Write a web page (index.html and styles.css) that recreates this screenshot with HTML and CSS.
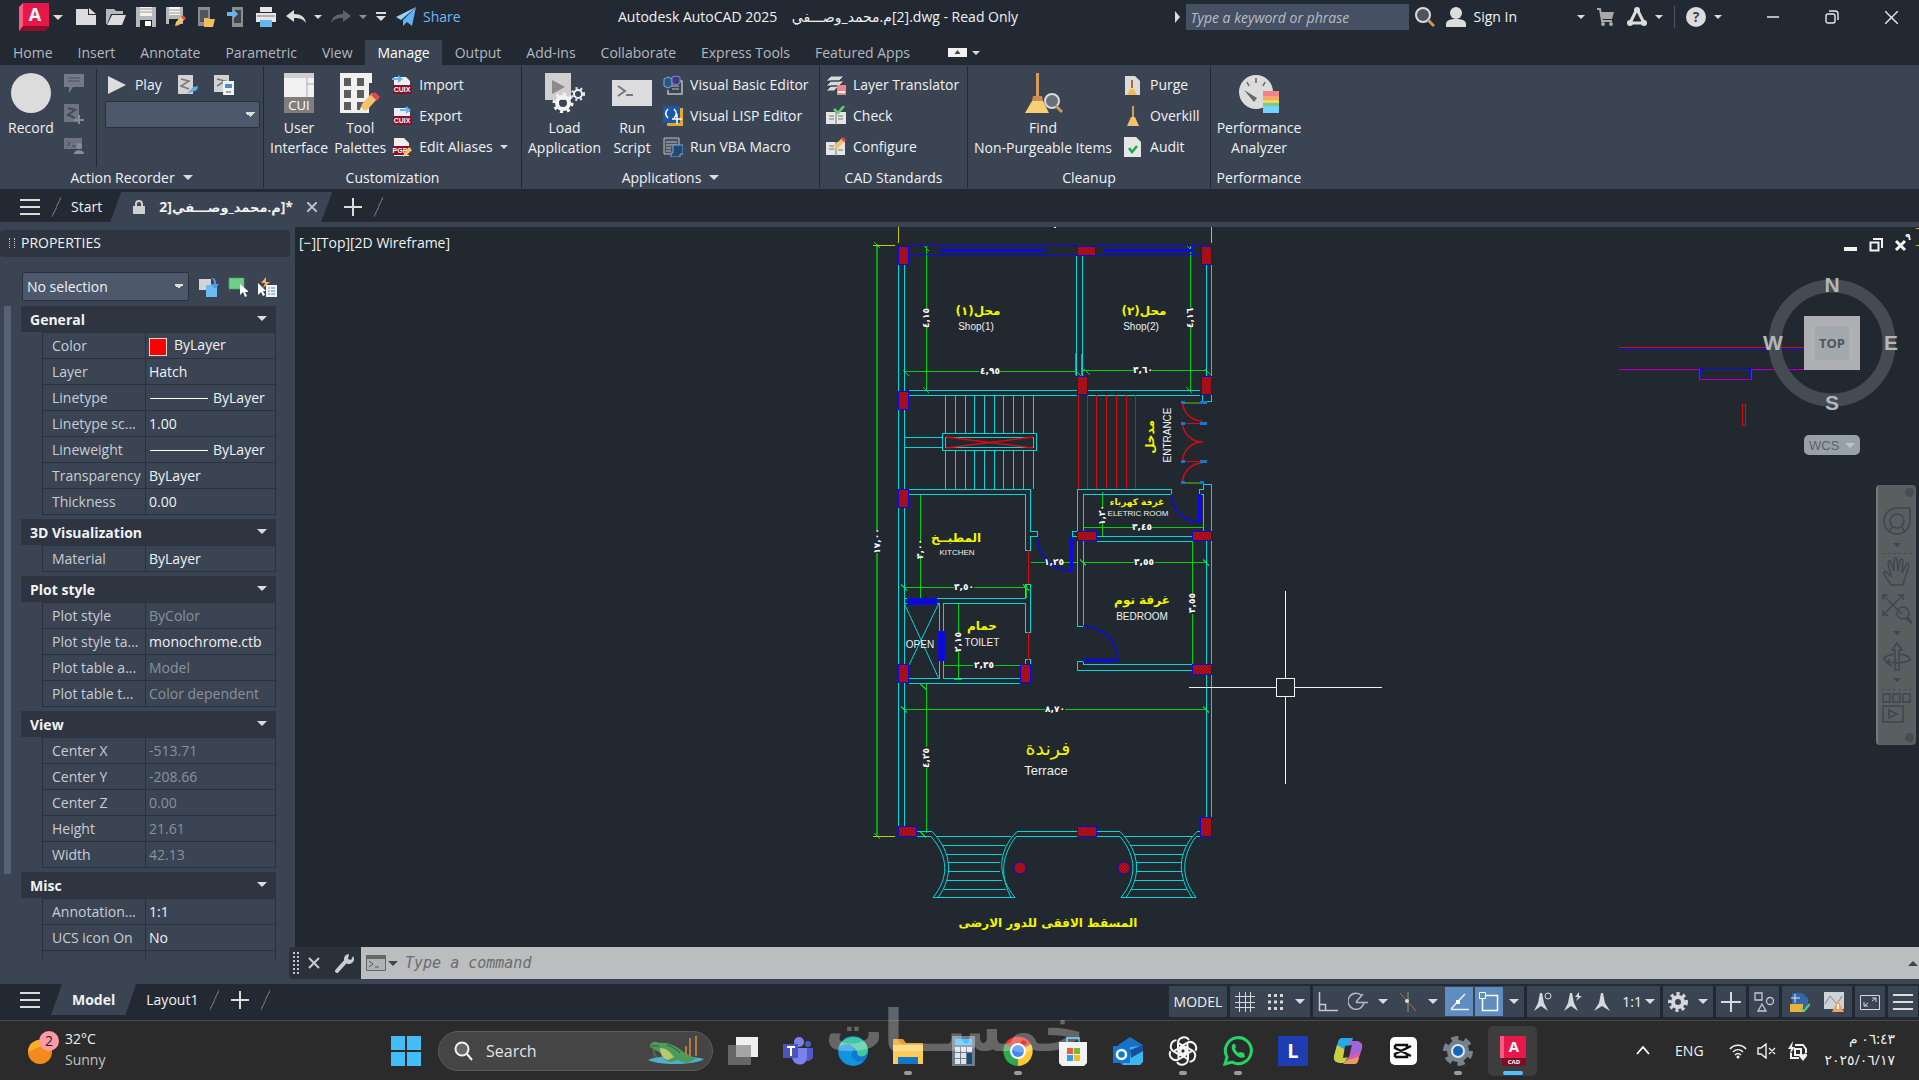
FILE: index.html
```html
<!DOCTYPE html>
<html lang="en">
<head>
  <meta charset="UTF-8">
  <meta name="viewport" content="width=device-width, initial-scale=1.0">
  <title>Autodesk AutoCAD 2025</title>
  <link rel="stylesheet" href="styles.css">
</head>
<body>

<header class="titlebar">
  <div class="quick-access">
    <button class="app-logo" aria-label="Application menu">
      <svg width="31" height="28" viewBox="0 0 31 28"><path d="M1 5 5 0h26v24l-4 4H1z" fill="#8e0d2b"/><path d="M1 4 5 0v23l-4 5z" fill="#ff5a80"/><path d="M5 0h26v23H5z" fill="#e8174b"/><text x="17" y="18" class="logo-letter">A</text></svg>
    </button>
    <i class="caret"></i>
    <button aria-label="New"><svg class="icon" viewBox="0 0 20 20"><path d="M0 2h12v6h8v10H0z" fill="#dcdcdc"/><path d="m13 1 7 6h-7z" fill="#dcdcdc"/></svg></button>
    <button aria-label="Open"><svg class="icon" viewBox="0 0 20 20"><path d="M0 2h8l2 2h7v3H5L1 17H0z" fill="#b8b8b8"/><path d="M6 8h14l-4 10H1z" fill="#dcdcdc"/></svg></button>
    <button aria-label="Save"><svg class="icon" viewBox="0 0 20 20"><path d="M0 0h20v20H0z" fill="#b4b7bb"/><path d="M4 0h12v9H4z" fill="#f2f2f2"/><path d="M4 2h12M4 5h12" stroke="#999"/><path d="M4 13h12v7H4z" fill="#222"/><path d="M9 14h6v5H9z" fill="#fff"/></svg></button>
    <button aria-label="Save as"><svg class="icon" viewBox="0 0 20 20"><path d="M0 0h17v17H0z" fill="#b4b7bb"/><path d="M3 0h11v8H3z" fill="#f2f2f2"/><path d="M3 3h11M3 6h11" stroke="#999"/><path d="M3 12h9v5H3z" fill="#222"/><path d="m9 19 1-4 6-6 3 3-6 6z" fill="#f3c26b"/><path d="m15 10 2-2 3 3-2 2z" fill="#e4474f"/></svg></button>
    <button aria-label="Open from mobile"><svg class="icon" viewBox="0 0 20 20"><path d="M2 0h12v19H2z" fill="#8c8c8c"/><path d="M4 3h8v12H4z" fill="#51565e"/><path d="M8 11h4l1 1h6l-2 8H8z" fill="#f0bd62"/></svg></button>
    <button aria-label="Save to mobile"><svg class="icon" viewBox="0 0 20 20"><path d="M6 0h11v20H6z" fill="#8c8c8c"/><path d="M8 3h7v13H8z" fill="#3e434b"/><path d="M1 5h6V2l5 5-5 5V9H1z" fill="#66b5ee"/></svg></button>
    <button aria-label="Plot"><svg class="icon" viewBox="0 0 20 20"><path d="M4 0h12v5H4zM0 6h20v9H0z" fill="#e6e6e6"/><path d="M1 9h18" stroke="#777"/><path d="M4 13h12v7H4z" fill="#64b5f0"/></svg></button>
    <button aria-label="Undo"><svg class="icon" viewBox="0 0 20 20"><path d="m0 9 8-6v4c7 0 11 3 12 9-3-4-6-5-12-5v4z" fill="#dcdcdc"/></svg></button>
    <i class="caret small"></i>
    <button aria-label="Redo"><svg class="icon" viewBox="0 0 20 20"><path d="m20 9-8-6v4C5 7 1 10 0 16c3-4 6-5 12-5v4z" fill="#5c626b"/></svg></button>
    <i class="caret small dim"></i>
    <button aria-label="Customize toolbar"><svg width="10" height="12" viewBox="0 0 10 12"><path d="M0 2h10" stroke="#dcdcdc" stroke-width="2"/><path d="M0 5h10l-5 5z" fill="#dcdcdc"/></svg></button>
    <button class="share"><svg class="icon" viewBox="0 0 20 20"><path d="M20 0 0 10l5 3z" fill="#9ad0fb"/><path d="M20 0 7 13v6l4-4 5 4z" fill="#62b2f4"/></svg>Share</button>
  </div>
  <div class="doc-title">Autodesk AutoCAD 2025 &nbsp;&nbsp; <bdi>م.محمد_وصـــفي</bdi>[2].dwg - Read Only</div>
  <div class="title-right">
    <i class="caret-right"></i>
    <input class="help-search" type="text" aria-label="Search help" placeholder="Type a keyword or phrase">
    <button aria-label="Search"><svg class="icon" viewBox="0 0 20 20"><circle cx="8" cy="8" r="7" fill="#4d545f" stroke="#dcdcdc" stroke-width="2"/><path d="m13 13 6 6" stroke="#c79a62" stroke-width="3"/></svg></button>
    <button class="signin"><svg class="icon" viewBox="0 0 20 20"><circle cx="10" cy="6" r="6" fill="#dcdcdc"/><path d="M0 20v-3c0-4 5-5 10-5s10 1 10 5v3z" fill="#dcdcdc"/></svg>Sign In</button>
    <i class="caret small"></i>
    <button aria-label="App store"><svg class="icon" viewBox="0 0 20 20"><path d="M1 2h3l2 12h10" fill="none" stroke="#a8a8a8" stroke-width="2"/><path d="M5 5h13l-2 7H6z" fill="#a8a8a8"/><circle cx="7" cy="17" r="2" fill="#a8a8a8"/><circle cx="15" cy="17" r="2" fill="#a8a8a8"/></svg></button>
    <button aria-label="Autodesk"><svg class="icon" viewBox="0 0 20 20"><path d="m10 2 7 14H3z" fill="none" stroke="#dcdcdc" stroke-width="3" stroke-linejoin="round"/><circle cx="3" cy="16" r="3" fill="#dcdcdc"/><circle cx="17" cy="16" r="3" fill="#dcdcdc"/><circle cx="10" cy="3" r="3" fill="#dcdcdc"/></svg></button>
    <i class="caret small"></i>
    <span class="title-divider"></span>
    <button aria-label="Help"><svg class="icon" viewBox="0 0 20 20"><circle cx="10" cy="10" r="10" fill="#dcdcdc"/><text x="10" y="15" class="help-mark">?</text></svg></button>
    <i class="caret small"></i>
    <div class="window-buttons">
      <button aria-label="Minimize"><svg width="12" height="12" viewBox="0 0 12 12"><path d="M0 6h12" stroke="#e8e8e8" stroke-width="1.5"/></svg></button>
      <button aria-label="Restore"><svg width="14" height="14" viewBox="0 0 14 14"><rect x="1" y="4" width="9" height="9" rx="2" fill="none" stroke="#e8e8e8" stroke-width="1.4"/><path d="M4 1h6a3 3 0 0 1 3 3v6" fill="none" stroke="#e8e8e8" stroke-width="1.4"/></svg></button>
      <button aria-label="Close"><svg width="13" height="13" viewBox="0 0 13 13"><path d="m0 0 13 13M13 0 0 13" stroke="#e8e8e8" stroke-width="1.4"/></svg></button>
    </div>
  </div>
</header>

<nav class="ribbon-tabs">
  <button>Home</button>
  <button>Insert</button>
  <button>Annotate</button>
  <button>Parametric</button>
  <button>View</button>
  <button class="active">Manage</button>
  <button>Output</button>
  <button>Add-ins</button>
  <button>Collaborate</button>
  <button>Express Tools</button>
  <button>Featured Apps</button>
  <button class="ribbon-toggle" aria-label="Minimize ribbon"><svg width="19" height="9" viewBox="0 0 19 9"><path d="M0 0h19v9H0z" fill="#f2f2f2"/><path d="m9.500 2 3 4h-6z" fill="#444"/></svg></button>
  <i class="caret small"></i>
</nav>

<section class="ribbon">
  <div class="panel recorder">
    <div class="panel-body">
      <button class="big"><svg class="big-icon" viewBox="0 0 40 40"><circle cx="20" cy="20" r="20" fill="#dcdcdc"/></svg>Record</button>
      <div class="stack">
        <button aria-label="Insert message"><svg class="icon" viewBox="0 0 20 20"><path d="M0 1h20v13H9l-4 6v-6H0z" fill="#747b86"/><path d="M4 5h12M4 8h12" stroke="#4a515e"/></svg></button>
        <button aria-label="Insert base point"><svg class="icon" viewBox="0 0 20 20"><path d="M0 0h15v18H0z" fill="#6d747f"/><path d="m4 4 7 2-7 5 7 3" fill="none" stroke="#434a57" stroke-width="2"/><path d="M15 11v9M10 16h10" stroke="#878d96" stroke-width="2"/></svg></button>
        <button aria-label="Request user input"><svg class="icon" viewBox="0 0 20 20"><path d="M0 3h18v11H0z" fill="#6d747f"/><path d="m3 6 3 3-3 2m5 0h4" fill="none" stroke="#3f4653"/><circle cx="15" cy="11" r="3" fill="#878d96"/><path d="M10 19c0-5 10-5 10 0z" fill="#878d96"/></svg></button>
      </div>
      <div class="recorder-side">
        <div class="play-row">
          <button><svg class="icon" viewBox="0 0 20 20"><path d="m0 1 18 9-18 9z" fill="#dcdcdc"/></svg>Play</button>
          <button aria-label="Preference"><svg class="icon" viewBox="0 0 20 20"><path d="M0 0h15v19H0z" fill="#d3d3d3"/><path d="m3 4 8 2-8 5 8 3" fill="none" stroke="#777" stroke-width="1.500"/><path d="m9 19 6-7 5-1-1 4z" fill="#63aeea"/></svg></button>
          <button aria-label="Manage macros"><svg class="icon" viewBox="0 0 20 20"><path d="M0 0h15v17H0z" fill="#d3d3d3"/><path d="m3 4 8 2-8 5" fill="none" stroke="#777" stroke-width="1.500"/><path d="M9 6h11v14H9z" fill="#f2f2f2"/><path d="M11 9h7v4h-7z" fill="#4a90c8"/><path d="M12 17h5" stroke="#555"/></svg></button>
        </div>
        <select class="macro-select" aria-label="Available action macros"><option></option></select>
      </div>
    </div>
    <div class="panel-title">Action Recorder <i class="caret"></i></div>
  </div>

  <div class="panel customization">
    <div class="panel-body">
      <button class="big"><svg class="big-icon" viewBox="0 0 40 40"><path d="M5 0h30v40H5z" fill="#f1f1f1"/><path d="M5 0h30v5H5z" fill="#cfcfcf"/><path d="M28 5v20M28 11h7" stroke="#aaa"/><path d="M5 24h30v16H5z" fill="#7f7f7f"/><text x="20" y="37" class="cui-text">CUI</text></svg>User<br>Interface</button>
      <button class="big"><svg class="big-icon" viewBox="0 0 40 40"><path d="M0 0h32v10h-3v30H0z" fill="#f1f1f1"/><path d="M4 5h7v8H4zm13 0h7v8h-7zM4 17h7v8H4zm13 0h7v8h-7zM4 29h7v8H4zm13 0h7v8h-7z" fill="#5c5c5c"/><path d="m19 40 3-9 10-11 6 5-11 12z" fill="#f3c26b"/><path d="m31 22 4-3 5 5-3 4z" fill="#e4474f"/><path d="m19 40 2-6 4 4z" fill="#eee"/></svg>Tool<br>Palettes</button>
      <div class="list">
        <button><svg class="icon" viewBox="0 0 20 20"><path d="M2 2h12l4 4v13H2z" fill="#eee"/><path d="M1 10h19v9H1z" fill="#8a1027"/><text x="10" y="17" class="file-tag">CUIX</text><path d="M0 3h6V0l5 4-5 4V5H0z" fill="#66b5ee"/></svg>Import</button>
        <button><svg class="icon" viewBox="0 0 20 20"><path d="M2 2h12l4 4v13H2z" fill="#eee"/><path d="M1 10h19v9H1z" fill="#8a1027"/><text x="10" y="17" class="file-tag">CUIX</text><path d="M8 3h6V0l5 4-5 4V5H8z" fill="#66b5ee"/></svg>Export</button>
        <button><svg class="icon" viewBox="0 0 20 20"><path d="M2 1h10l5 5v13H2z" fill="#eee"/><path d="M1 9h17v9H1z" fill="#8a1027"/><text x="8" y="16" class="file-tag">PGP</text><path d="m11 20 1-4 5-6 3 3-5 5z" fill="#f3c26b"/></svg>Edit Aliases<i class="caret small"></i></button>
      </div>
    </div>
    <div class="panel-title">Customization</div>
  </div>

  <div class="panel applications">
    <div class="panel-body">
      <button class="big"><svg class="big-icon" viewBox="0 0 40 40"><path d="M0 0h26v27H0z" fill="#cfcfcf"/><path d="m7 7 13 7-13 7z" fill="#8a8a8a"/><circle cx="18" cy="30" r="6" fill="none" stroke="#f4f4f4" stroke-width="4"/><circle cx="18" cy="30" r="9" fill="none" stroke="#f4f4f4" stroke-width="3" stroke-dasharray="3 4"/><circle cx="33" cy="21" r="4" fill="none" stroke="#f4f4f4" stroke-width="2"/><circle cx="33" cy="21" r="6" fill="none" stroke="#f4f4f4" stroke-width="2" stroke-dasharray="2 3"/></svg>Load<br>Application</button>
      <button class="big"><svg class="big-icon" viewBox="0 0 40 40"><path d="M0 7h40v26H0z" fill="#dcdcdc"/><path d="m6 13 7 5-7 5M14 22h7" fill="none" stroke="#777" stroke-width="2"/></svg>Run<br>Script</button>
      <div class="list">
        <button><svg class="icon" viewBox="0 0 20 20"><path d="M8 6h11v13H5v-4" fill="none" stroke="#bbb" stroke-width="1.500"/><path d="M9 11h7M9 14h7" stroke="#bbb"/><path d="m1 4 4-2 4 2v7l-4 2-4-2z" fill="#2d567c" stroke="#6fb6ec"/><path d="m9 2 4-1 4 1v6l-4 2-4-2z" fill="#3c3f77" stroke="#8d82dd"/></svg>Visual Basic Editor</button>
        <button><svg class="icon" viewBox="0 0 20 20"><path d="M4 2h16v18H4z" fill="#e3a92f"/><path d="M0 0h17v17H0z" fill="#1c58a8"/><path d="M5 3c-3 3-3 6 0 9M11 3c3 3 3 6 0 9M14 8v10M9 13h10" fill="none" stroke="#fff" stroke-width="1.500"/></svg>Visual LISP Editor</button>
        <button><svg class="icon" viewBox="0 0 20 20"><path d="M1 1h15v16H1z" fill="#4a5260" stroke="#bbb"/><path d="M3 5h11M3 8h11M3 11h5M3 14h5" stroke="#bbb"/><path d="M10 8h10v9h-3v3H8v-4h2z" fill="#29476a" stroke="#63aeea"/></svg>Run VBA Macro</button>
      </div>
    </div>
    <div class="panel-title">Applications <i class="caret"></i></div>
  </div>

  <div class="panel standards">
    <div class="panel-body">
      <div class="list">
        <button><svg class="icon" viewBox="0 0 20 20"><path d="m5 1h13l-5 5H0zM5 6h13l-5 5H0zM5 11h8l-5 5H0z" fill="#d9d9d9" stroke="#3b4453"/><path d="M11 10h9v10h-9z" fill="#f2828b"/><path d="M12 17h7" stroke="#fff" stroke-width="2"/></svg>Layer Translator</button>
        <button><svg class="icon" viewBox="0 0 20 20"><path d="M0 6h9l1 1 1-1h9v12H0z" fill="#e6e6e6"/><path d="M10 7v12M3 10h5M3 13h5M12 10h5M12 13h5" stroke="#777"/><path d="m8 3 4 4 6-7" fill="none" stroke="#5fd07a" stroke-width="2.500"/></svg>Check</button>
        <button><svg class="icon" viewBox="0 0 20 20"><path d="M0 5h9l1 1 1-1h8v13H0z" fill="#e6e6e6"/><path d="M10 6v13M3 9h5M3 12h5M12 13h5" stroke="#777"/><path d="m8 12 1-4 7-7 3 3-7 7z" fill="#f3c26b"/><path d="m15 2 2-2 3 3-2 2z" fill="#e4474f"/></svg>Configure</button>
      </div>
    </div>
    <div class="panel-title">CAD Standards</div>
  </div>

  <div class="panel cleanup">
    <div class="panel-body">
      <button class="big"><svg class="big-icon" viewBox="0 0 40 40"><path d="M13 0h3v24h-3z" fill="#d99a5b"/><path d="M10 23h9l1 5H9z" fill="#c98f50"/><path d="M9 28h11l6 12H2z" fill="#f9cf76"/><circle cx="29" cy="28" r="7" fill="#69707b" stroke="#dcdcdc" stroke-width="2"/><path d="m33 33 6 6" stroke="#c79a62" stroke-width="3"/></svg>Find<br>Non-Purgeable Items</button>
      <div class="list">
        <button><svg class="icon" viewBox="0 0 20 20"><path d="M2 1h10l5 5v14H2z" fill="#dcdcdc"/><path d="M8 5h2v8H8z" fill="#a96b2f"/><path d="M7 14h4l3 6H4z" fill="#f3b852"/></svg>Purge</button>
        <button><svg class="icon" viewBox="0 0 20 20"><path d="M9 0h2v11H9z" fill="#d99a5b"/><path d="M8 11h4l4 9H4z" fill="#f3c26b"/></svg>Overkill</button>
        <button><svg class="icon" viewBox="0 0 20 20"><path d="M1 0h12l5 5v15H1z" fill="#e6e6e6"/><path d="m6 11 3 4 5-6" fill="none" stroke="#1fa84c" stroke-width="2.500"/></svg>Audit</button>
      </div>
    </div>
    <div class="panel-title">Cleanup</div>
  </div>

  <div class="panel performance">
    <div class="panel-body">
      <button class="big"><svg class="big-icon" viewBox="0 0 40 40"><circle cx="17" cy="19" r="17" fill="#dcdcdc"/><path d="M17 5v5M8 9l2 4M26 9l-2 4" stroke="#666" stroke-width="1.500"/><path d="m5 17 13 8-3 4z" fill="#666"/><path d="M24 18h16v22H24z" fill="#78d1fb"/><path d="M24 18h16v5H24z" fill="#f2828b"/><path d="M24 23h16v4H24z" fill="#f5a96a"/><path d="M24 27h16v3H24z" fill="#f5d265"/><path d="M24 30h16v3H24z" fill="#6fcf86"/></svg>Performance<br>Analyzer</button>
    </div>
    <div class="panel-title">Performance</div>
  </div>
</section>

<nav class="file-tabs">
  <button class="hamburger" aria-label="Tab menu"><i></i></button>
  <span class="slash"></span>
  <button class="tab-plain">Start</button>
  <div class="file-tab">
    <svg width="12" height="14" viewBox="0 0 12 14"><path d="M3 6V4a3 3 0 0 1 6 0v2" fill="none" stroke="#cfcfcf" stroke-width="2"/><path d="M0 6h12v8H0z" fill="#cfcfcf"/></svg>
    <button class="tab-name">2]<bdi>م.محمد_وصـــفي</bdi>]*</button>
    <button aria-label="Close tab"><svg width="10" height="10" viewBox="0 0 10 10"><path d="m0 0 10 10M10 0 0 10" stroke="#b9bec6" stroke-width="2"/></svg></button>
  </div>
  <button class="plus" aria-label="New tab"></button>
  <span class="slash"></span>
</nav>

<main class="workspace">
  <aside class="palette">
    <h2>PROPERTIES</h2>
    <div class="palette-tools">
      <select aria-label="Selection"><option>No selection</option></select>
      <button aria-label="Toggle pickadd"><svg class="icon" viewBox="0 0 20 20"><path d="M0 2h12v11H0z" fill="#d4d4d4"/><path d="M7 8h11v12H7z" fill="#6bbcf2"/><path d="M12 1c5 0 5 3 5 6h3l-4 5-4-5h3c0-3 0-4-3-6z" fill="#4f9de0"/></svg></button>
      <button aria-label="Select objects"><svg class="icon" viewBox="0 0 20 20"><path d="M1 1h15v11H1z" fill="#6fcf86" stroke="#3fa85c" stroke-dasharray="2 1"/><path d="M12 7v11l3-3 2 5 2-1-2-4h4z" fill="#fff"/></svg></button>
      <button aria-label="Quick select"><svg class="icon" viewBox="0 0 20 20"><path d="m9 0-5 6h4l-2 5 7-6H9z" fill="#f5b061"/><path d="M1 6v12l3-3 2 4 2-1-2-4h3z" fill="#fff"/><path d="M9 8h11v12H9z" fill="#f2f2f2"/><path d="M11 11h2m1 0h4m-7 3h2m1 0h4m-7 3h2m1 0h4" stroke="#3d8fd1"/></svg></button>
    </div>
    <div class="property-list">
      <table>
        <caption>General<i class="caret"></i></caption>
        <tr><th>Color</th><td><span class="swatch"></span>ByLayer</td></tr>
        <tr><th>Layer</th><td>Hatch</td></tr>
        <tr><th>Linetype</th><td><span class="line-sample"></span>ByLayer</td></tr>
        <tr><th>Linetype sc...</th><td>1.00</td></tr>
        <tr><th>Lineweight</th><td><span class="line-sample"></span>ByLayer</td></tr>
        <tr><th>Transparency</th><td>ByLayer</td></tr>
        <tr><th>Thickness</th><td>0.00</td></tr>
      </table>
      <table>
        <caption>3D Visualization<i class="caret"></i></caption>
        <tr><th>Material</th><td>ByLayer</td></tr>
      </table>
      <table>
        <caption>Plot style<i class="caret"></i></caption>
        <tr><th>Plot style</th><td class="locked">ByColor</td></tr>
        <tr><th>Plot style ta...</th><td>monochrome.ctb</td></tr>
        <tr><th>Plot table a...</th><td class="locked">Model</td></tr>
        <tr><th>Plot table t...</th><td class="locked">Color dependent</td></tr>
      </table>
      <table>
        <caption>View<i class="caret"></i></caption>
        <tr><th>Center X</th><td class="locked">-513.71</td></tr>
        <tr><th>Center Y</th><td class="locked">-208.66</td></tr>
        <tr><th>Center Z</th><td class="locked">0.00</td></tr>
        <tr><th>Height</th><td class="locked">21.61</td></tr>
        <tr><th>Width</th><td class="locked">42.13</td></tr>
      </table>
      <table>
        <caption>Misc<i class="caret"></i></caption>
        <tr><th>Annotation...</th><td>1:1</td></tr>
        <tr><th>UCS icon On</th><td>No</td></tr>
        <tr><th>UCS icon at...</th><td>No</td></tr>
      </table>
    </div>
  </aside>

  <div class="drawing-column">
    <div class="drawing">
      <svg class="plan" viewBox="295 227 1624 720">
        <defs>
          <pattern id="hatch" width="3" height="3" patternUnits="userSpaceOnUse">
            <path d="M0 0h3v3H0z" fill="#c40a12"/><path d="M0 3 3 0" stroke="#6b1420"/>
          </pattern>
        </defs>

        <!-- dimension lines -->
        <g class="dim">
          <path class="dim-main" d="M877 244V530M877 553V837"/>
          <path d="M926.500 245V308M926.500 327V391M904 371.500H979M1000 371.500H1076M1082 370.500H1135M1152 370.500H1206M1190.500 245V308M1190.500 327V391"/>
          <path d="M920.500 494V543M920.500 555V598M904 587.500H954M974 587.500H1026M1102.500 492V507M1102.500 523V537M1083 527.500H1133M1152 527.500H1203M1031 562.500H1045M1063 562.500H1078M1083 562.500H1134M1155 562.500H1206M1192.500 541V593M1192.500 614V665"/>
          <path d="M958.500 603V633M958.500 651V679M943 665.500H973M995 665.500H1026M904 709.500H1045M1065 709.500H1206M926.500 683V747M926.500 768V833"/>
          <path d="M904.500 357V375M1075.500 353V375M1081.500 354V375M1206.500 357V375M904.500 584V598M1026.500 584V598M1083.500 541V567M1206.500 541V567M904.500 684V713M1206.500 676V713M909 390.500H930M1186 390.500H1200M909 494.500H924M917 683.500H931M922 831.500H932M954 603.500H962M954 679.500H962"/>
          <path d="m874 242 6 6m-6 585 6 6m43-594 6 6m-6 136 6 6m257-148 6 6m-6 136 6 6m-289-23 6 6m166-6 6 6m3-7 6 6m115-6 6 6M901 584.500l6 6m116-6 6 6m51-31 6 6m117-6 6 6m-308 141 6 6m296-6 6 6m-289-29 6 6m-6 142 6 6"/>
        </g>
        <path class="mark" d="M898.500 227V243M1211.500 227V243M873 245.500H895M873 836.500H895M1916 228.500H1919M1916 245.500H1919"/>
        <path class="white" d="M1054 227.500h2"/>

        <!-- walls -->
        <g class="wall">
          <path d="M898.500 264V391M898.500 410V489M898.500 508V664M898.500 683V826M904.500 264V391M904.500 410V489M904.500 508V664M904.500 683V826"/>
          <path d="M1206.500 264V376M1211.500 264V376M1211.500 395V401H1202.500V395M1206.500 541V664M1206.500 675V817M1203.500 531V494H1199.500V489H1203.500V484H1211.500V817"/>
          <path d="M1076.500 256V376M1082.500 256V376M909 390.500H1077M909 395.500H1077M1087 390.500H1200M1087 395.500H1200"/>
          <path d="M945.500 395V433M955.500 395V433M965.500 395V433M974.500 395V433M984.500 395V433M994.500 395V433M1003.500 395V433M1013.500 395V433M1023.500 395V433M1033.500 395V433M945.500 451V489M955.500 451V489M965.500 451V489M974.500 451V489M984.500 451V489M994.500 451V489M1003.500 451V489M1013.500 451V489M1023.500 451V489M1033.500 451V489"/>
          <path d="M942.500 433.500H1036.500V450.500H942.500zM945.500 437.500H1033.500V447.500H945.500zM904 437.500H942M904 447.500H942"/>
          <path d="M909 489.500H1030.500V531.500H1037.500V536.500H1030.500V550.500H1025.500V494.500H909M1025.500 598.500V584.500H1030.500V632.500H1025.500V603.500H943.500V678.500H1020M904 598.500H1025.500M904 603.500H939.500V678.500H909M909 683.500H1020M1025.500 664V659.500H1030.500V664"/>
          <path class="smooth" d="M904.500 604 938.500 678M938.500 604 909 665"/>
          <path d="M1077.500 531V489.500H1171.500V494.500H1083.500V531M1077 536.500H1072.500V531.500H1077M1097 536.500H1192M1097 541.500H1192M1077.500 541V626.500H1083.500V541M1192 664.500H1083.500V661.500H1077.500V670.500H1192"/>
          <path d="M937 836.500H1011M943 845.500H1005M947 854.500H1002M948 862.500H1000M948 871.500H1000M947 880.500H1002M944 889.500H1006M933 897.500H1015M1125 836.500H1192M1131 845.500H1186M1134 854.500H1183M1136 862.500H1182M1136 871.500H1182M1134 880.500H1184M1131 889.500H1187M1121 897.500H1196"/>
          <path class="smooth" d="M917 831.500H932C953 853 953 877 938 897.500M917 836.500H931C949 857 949 878 933 897.500M1077 831.500H1017C996 853 998 877 1015 897.500M1077 836.500H1016C1000 857 1001 878 1011 897.500M1097 831.500H1120C1141 853 1141 877 1126 897.500M1097 836.500H1120C1137 857 1137 878 1121 897.500M1200 831.500H1197C1176 853 1178 877 1192 897.500M1200 836.500H1196C1181 857 1181 878 1196 897.500"/>
        </g>

        <!-- windows, doors and entrance steps -->
        <g class="opening">
          <path d="M909 245.500H1077M1096 245.500H1201M909 254.500H1077M1096 254.500H1201M939.500 245V254M1045.500 245V254M1103.500 245V254M1192.500 245V254"/>
          <path class="thick" d="M939 250H1045M1103 250H1192M1071 537V571M1199 494V522M1083 660H1118"/>
          <path class="window" d="M907 598h29v6h-29zM938 631h6v29h-6z"/>
          <path class="smooth" d="M1037.500 537A34 34 0 0 0 1071 571M1171.500 494A28 28 0 0 0 1199 522M1083 626A35 35 0 0 1 1118 660"/>
        </g>
        <g class="red">
          <path d="M1078.500 395V489M1087.500 395V489M1096.500 395V489M1106.500 395V489M1116.500 395V489M1126.500 395V489M1135.500 395V489M1028.500 550V584M1028.500 632V660M1184 423.500H1204M1184 461.500H1204"/>
          <path class="smooth" d="M946 437 1033 448M946 448 1033 437M1182.500 403A20 20 0 0 0 1202 421M1182.500 423A20 20 0 0 0 1203 442A20 20 0 0 0 1182.500 461M1202 463A20 20 0 0 0 1182.500 482"/>
        </g>
        <path class="jamb" d="M1181 402.500h4m15 0h7M1181 423.500h4m15 0h7M1181 461.500h4m15 0h7M1181 482.500h4m15 0h4"/>
        <path class="sill" d="M1185 402.500h15m-15 80h15"/>

        <!-- columns -->
        <g class="column">
          <rect x="898.500" y="246.500" width="10" height="18"/><rect x="1077.500" y="246.500" width="18" height="9"/><rect x="1201.500" y="246.500" width="10" height="18"/>
          <rect x="898.500" y="391.500" width="10" height="18"/><rect x="1077.500" y="376.500" width="10" height="18"/><rect x="1201.500" y="376.500" width="10" height="18"/>
          <rect x="898.500" y="489.500" width="10" height="18"/><rect x="1077.500" y="531.500" width="19" height="9"/><rect x="1192.500" y="531.500" width="19" height="9"/>
          <rect x="898.500" y="664.500" width="10" height="18"/><rect x="1020.500" y="664.500" width="10" height="18"/><rect x="1192.500" y="664.500" width="19" height="10"/>
          <rect x="898.500" y="826.500" width="18" height="10"/><rect x="1077.500" y="826.500" width="19" height="10"/><rect x="1200.500" y="817.500" width="11" height="19"/>
          <circle cx="1020" cy="868" r="6"/><circle cx="1124" cy="868" r="6"/>
        </g>

        <!-- section at the right of the sheet -->
        <path class="red" d="M1619 347.500H1832M1619 369.500H1699.500V379.500H1751.500V369.500H1832M1742.500 404.500h3v21h-3z"/>
        <path class="opening" d="M1619 348.500H1832M1619 368.500H1832M1700.500 368V378.500H1750.500V368"/>

        <!-- room names -->
        <g class="arabic">
          <text x="978" y="315">محل(١)</text>
          <text x="1144" y="315">محل(٢)</text>
          <text transform="translate(1154 437) rotate(-90)">مدخل</text>
          <text x="956" y="542">المطبــخ</text>
          <text class="tiny" x="1137" y="505">غرفة كهرباء</text>
          <text x="1142" y="604">غرفة نوم</text>
          <text x="982" y="630">حمام</text>
          <text class="large" x="1048" y="755">فرندة</text>
          <text x="1048" y="927">المسقط الافقى للدور الارضى</text>
        </g>
        <g class="latin">
          <text x="976" y="330">Shop(1)</text>
          <text x="1141" y="330">Shop(2)</text>
          <text transform="translate(1171 435) rotate(-90)">ENTRANCE</text>
          <text class="tiny" x="957" y="555">KITCHEN</text>
          <text class="tiny" x="1138" y="516">ELETRIC ROOM</text>
          <text x="1142" y="620">BEDROOM</text>
          <text x="982" y="646">TOILET</text>
          <text x="920" y="648">OPEN</text>
          <text class="large" x="1046" y="775">Terrace</text>
        </g>
        <g class="measure">
          <text x="990" y="374">٤,٩٥</text>
          <text x="1143" y="373">٣,٦٠</text>
          <text x="964" y="590">٣,٥٠</text>
          <text x="1142" y="530">٣,٤٥</text>
          <text x="1054" y="565">١,٢٥</text>
          <text x="1144" y="565">٣,٥٥</text>
          <text x="984" y="668">٢,٣٥</text>
          <text x="1055" y="712">٨,٧٠</text>
          <text transform="translate(929 318) rotate(-90)">٤,١٥</text>
          <text transform="translate(1193 318) rotate(-90)">٤,١٦</text>
          <text transform="translate(880 541) rotate(-90)">١٧,٠٠</text>
          <text transform="translate(923 549) rotate(-90)">٣,٠٠</text>
          <text transform="translate(1105 515) rotate(-90)">١,٢٠</text>
          <text transform="translate(1195 603) rotate(-90)">٣,٥٥</text>
          <text transform="translate(961 642) rotate(-90)">٢,١٥</text>
          <text transform="translate(929 758) rotate(-90)">٤,٢٥</text>
          <text x="1908" y="240">٩</text>
        </g>

        <!-- crosshair -->
        <path class="white" d="M1189 687.500H1276M1295 687.500H1382M1285.500 591V678M1285.500 697V784M1276.500 678.500h18v18h-18z"/>
      </svg>

      <div class="view-label">[−][Top][2D Wireframe]</div>
      <div class="viewport-buttons">
        <button aria-label="Minimize drawing"><svg width="14" height="14" viewBox="0 0 14 14"><path d="M0 9h13v4H0z" fill="#f2f2f2"/></svg></button>
        <button aria-label="Restore drawing"><svg width="14" height="14" viewBox="0 0 14 14"><path d="M4 1h9v9M1.500 4.500h8v8h-8z" fill="none" stroke="#f2f2f2" stroke-width="2"/></svg></button>
        <button aria-label="Close drawing"><svg width="14" height="14" viewBox="0 0 14 14"><path d="m2 3 9 9m0-9-9 9" stroke="#f2f2f2" stroke-width="3"/></svg></button>
      </div>
      <div class="view-cube">
        <svg width="138" height="138" viewBox="0 0 138 138">
          <circle cx="69" cy="68" r="57" fill="none" stroke="#454b53" stroke-width="13"/>
          <path d="M41 41h56v54H41z" fill="#b3b5b8" fill-opacity=".96"/>
          <path d="M52 51h34v34H52z" fill="#a3a8ad"/>
          <text class="cube-top" x="69" y="73">TOP</text>
          <g class="cube-side"><text x="69" y="17">N</text><text x="69" y="135">S</text><text x="10" y="75">W</text><text x="128" y="75">E</text></g>
        </svg>
        <button class="wcs">WCS <i class="caret"></i></button>
      </div>
      <div class="nav-bar">
        <button aria-label="Full navigation wheel"><svg width="30" height="30" viewBox="0 0 30 30"><path d="M15 2h13v13a13 13 0 1 1-13-13z"/><circle cx="15" cy="15" r="7"/><path d="m10 21-3 5m13-5 3 5"/></svg></button>
        <i class="caret small"></i>
        <button class="group" aria-label="Pan"><svg width="30" height="30" viewBox="0 0 30 30"><path d="M9 28 2 17c-1-3 2-3 3-1l4 3L6 6c0-3 3-3 3 0l3 8V3c0-3 3-3 3 0l1 11 2-10c1-3 3-2 3 0l-1 12 4-8c1-3 3-1 3 1l-4 12-2 7z"/></svg></button>
        <button aria-label="Zoom extents"><svg width="30" height="30" viewBox="0 0 30 30"><path d="m2 2 18 18M20 2 2 20M1 6V1h5M16 1h5v5M1 16v5h5"/><circle cx="21" cy="19" r="6"/><path d="m25 24 5 5" stroke-width="3"/></svg></button>
        <i class="caret small"></i>
        <button aria-label="Orbit"><svg width="30" height="30" viewBox="0 0 30 30"><path d="M13 28V8h-3l5-7 5 7h-3v20zM12 12c-14 3-14 8 3 9 17-1 17-6 3-9M8 17l-3 4 5 3"/></svg></button>
        <i class="caret small"></i>
        <button class="group" aria-label="Show motion"><svg width="30" height="30" viewBox="0 0 30 30"><path d="M1 1h7v8H1zM11 1h7v8h-7zM21 1h7v8h-7zM1 13h20v16H1zM7 17l8 4-8 4z"/></svg></button>
      </div>
    </div>

    <div class="command-line">
      <span class="grip"></span>
      <button aria-label="Close command line"><svg width="12" height="12" viewBox="0 0 12 12"><path d="m1 1 10 10M11 1 1 11" stroke="#c9ccd0" stroke-width="2"/></svg></button>
      <button aria-label="Customize"><svg width="20" height="20" viewBox="0 0 20 20"><path d="m2 18 9-10" stroke="#c9ccd0" stroke-width="4" stroke-linecap="round"/><path d="M18 3a5 5 0 1 1-4-2l-1 5 3 1z" fill="#c9ccd0"/></svg></button>
      <label class="command-field">
        <svg width="20" height="16" viewBox="0 0 20 16"><path d="M.5.500h19v15H.5z" fill="#b0b2b4" stroke="#666"/><path d="M0 0h20v4H0z" fill="#666"/><path d="m3 6 4 3-4 3m6 0h4" fill="none" stroke="#555"/></svg>
        <i class="caret dark"></i>
        <input type="text" aria-label="Command" placeholder="Type a command">
        <i class="caret-up"></i>
      </label>
    </div>
  </div>
</main>

<footer class="status-bar">
  <div class="layout-tabs">
    <button class="hamburger" aria-label="Layout menu"><i></i></button>
    <button class="layout-tab">Model</button>
    <button class="tab-plain">Layout1</button>
    <span class="slash"></span>
    <button class="plus" aria-label="New layout"></button>
    <span class="slash"></span>
  </div>
  <div class="status-tools">
    <div class="tool-group"><button class="model-space">MODEL</button></div>
    <div class="tool-group">
      <button aria-label="Grid"><svg class="icon" viewBox="0 0 20 20"><path d="M4.500 0v20M10.500 0v20M15.500 0v20M0 4.500h20M0 10.500h20M0 15.500h20" stroke="#d5d8dc"/></svg></button>
      <button aria-label="Snap"><svg class="icon" viewBox="0 0 20 20"><path d="M3 3.500h16M3 10h16M3 16.500h16" stroke="#d5d8dc" stroke-width="3" stroke-dasharray="3 3"/></svg></button>
      <i class="caret"></i>
    </div>
    <div class="tool-group">
      <button aria-label="Ortho"><svg class="icon" viewBox="0 0 20 20"><path d="M1.500 0v18.500H20M1.500 12.500h6v6" fill="none" stroke="#c5c9cf" stroke-width="1.500"/></svg></button>
      <button aria-label="Polar tracking"><svg class="icon" viewBox="0 0 20 20"><path d="M14 4a8 8 0 1 0 2 6M8 10.500h12M8 10l7-8" fill="none" stroke="#b4b9c1" stroke-width="1.500"/></svg></button>
      <i class="caret"></i>
      <button aria-label="Isometric drafting"><svg class="icon" viewBox="0 0 20 20"><path d="M10 0v20" stroke="#63b56e"/><path d="m2 1 16 18" stroke="#c4614c"/><circle cx="9" cy="9" r="2" fill="#ddd"/></svg></button>
      <i class="caret"></i>
      <button class="on" aria-label="Object snap tracking"><svg class="icon" viewBox="0 0 20 20"><path d="M2 17.500h18M2 17 16 2" stroke="#e8f0f8" stroke-width="1.500"/><path d="M7 8h4v4H7z" fill="#fff"/></svg></button>
      <button class="on" aria-label="Object snap"><svg class="icon" viewBox="0 0 20 20"><path d="M3.500 3.500h15v15h-15z" fill="none" stroke="#fff" stroke-width="1.500"/><path d="M.5.500h6v6h-6z" fill="#5f8dc0" stroke="#fff"/></svg></button>
      <i class="caret"></i>
    </div>
    <div class="tool-group">
      <button aria-label="Annotation visibility"><svg class="icon" viewBox="0 0 20 20"><path d="M8 1h2l2 10 4 8-7-5-7 5 4-8z" fill="#d5d8dc"/><circle cx="16" cy="4" r="3" fill="none" stroke="#d5d8dc"/></svg></button>
      <button aria-label="Autoscale"><svg class="icon" viewBox="0 0 20 20"><path d="M8 1h2l2 10 4 8-7-5-7 5 4-8z" fill="#d5d8dc"/><path d="m17 0-4 5h3l-2 4 6-5h-3z" fill="#d5d8dc"/></svg></button>
      <button aria-label="Annotation scale icon"><svg class="icon" viewBox="0 0 20 20"><path d="M9 1h2l2 10 5 8-8-5-8 5 5-8z" fill="#d5d8dc"/></svg></button>
      <button class="scale">1:1</button>
      <i class="caret"></i>
    </div>
    <div class="tool-group">
      <button aria-label="Workspace"><svg class="icon" viewBox="0 0 20 20"><circle cx="10" cy="10" r="5" fill="none" stroke="#d5d8dc" stroke-width="4"/><circle cx="10" cy="10" r="8" fill="none" stroke="#d5d8dc" stroke-width="4" stroke-dasharray="3 3"/></svg></button>
      <i class="caret"></i>
    </div>
    <div class="tool-group"><button aria-label="Annotation monitor"><svg class="icon" viewBox="0 0 20 20"><path d="M10 0v20M0 10h20" stroke="#d5d8dc" stroke-width="2"/></svg></button></div>
    <div class="tool-group"><button aria-label="Isolate objects"><svg class="icon" viewBox="0 0 20 20"><path d="M1 1h7v7H1zM8 12l4 7H4z" fill="none" stroke="#c5c9cf" stroke-width="1.300"/><circle cx="16" cy="9" r="3.500" fill="none" stroke="#c5c9cf" stroke-width="1.300"/></svg></button></div>
    <div class="tool-group wide">
      <button aria-label="Trusted drawing"><svg class="icon" viewBox="0 0 20 20"><path d="M2 1h10l6 5v10H2z" fill="#3268a8"/><path d="M0 12h13v8H0z" fill="#e9b33b"/><path d="M5 2v9M1 6h9" stroke="#dce9f7"/><path d="m11 16 3 3 6-7" fill="none" stroke="#5fd07a" stroke-width="2"/></svg></button>
      <button aria-label="Graphics performance"><svg class="icon" viewBox="0 0 20 20"><path d="M0 0h20v17H0z" fill="#cfd3d8"/><path d="m1 12 5-8 7 8 5-8" fill="none" stroke="#7a8391"/><path d="m14 8 6 12H8z" fill="#eda066"/><path d="M14 12v5" stroke="#fff" stroke-width="2"/></svg></button>
    </div>
    <div class="tool-group"><button aria-label="Clean screen"><svg class="icon" viewBox="0 0 20 20"><path d="M.5 3.500h19v14H.5z" fill="none" stroke="#d5d8dc"/><path d="m4 14 4-3m4-2 4-3M4 10v4h4M12 6h4v4" fill="none" stroke="#d5d8dc"/></svg></button></div>
    <div class="tool-group"><button class="hamburger" aria-label="Customization"><i></i></button></div>
  </div>
</footer>

<div class="taskbar">
  <button class="weather">
    <svg width="32" height="36" viewBox="0 0 32 36"><circle cx="12" cy="21" r="12" fill="#f58a1c"/><path d="M0 21a12 12 0 0 1 20-9z" fill="#f8ae28"/><circle cx="21" cy="10" r="10" fill="#ff99a4"/><text x="21" y="15" class="badge-text">2</text></svg>
    <span>32°C<br><em>Sunny</em></span>
  </button>
  <button class="start" aria-label="Start"><svg width="30" height="30" viewBox="0 0 30 30"><path d="M0 0h14v14H0zM16 0h14v14H16zM0 16h14v14H0zM16 16h14v14H16z" fill="#42bdf8"/></svg></button>
  <label class="task-search">
    <svg width="19" height="20" viewBox="0 0 19 20"><circle cx="8" cy="8" r="6.500" fill="#666" stroke="#f2f2f2" stroke-width="2"/><path d="m13 13 5 6" stroke="#f2f2f2" stroke-width="2"/></svg>
    <input type="text" aria-label="Search Windows" placeholder="Search">
    <svg width="56" height="32" viewBox="0 0 56 32"><path d="M0 25c10-5 40-5 56-1-8 6-44 7-56 1z" fill="#4db0d3"/><path d="M2 10c2-4 6-4 9-2 8-1 16 2 23 8 6 4 10 5 14 8l-8 4c-4-1-7-1-10-3l-7 2c-5 0-8-3-9-8-3-2-8-5-12-7z" fill="#4d9b5b"/><path d="M12 13c7 0 10 4 14 9l-6 3c-5-1-8-6-8-12z" fill="#b9c96a"/><path d="M3 11h8m8-1c5 1 9 4 13 8" fill="none" stroke="#2b5c3a"/><path d="M42 21V3M48 21V1M38 20v-9" stroke="#b27a45" stroke-width="2"/><path d="M6 22v-8m3 9-4-9" stroke="#60754f"/></svg>
  </label>
  <div class="task-apps">
    <button aria-label="Task view"><svg class="task-icon" viewBox="0 0 30 30"><path d="M0 9h23v20H0z" fill="#666"/><path d="M8 1h22v20H8z" fill="#f0f0f0"/><path d="M8 9h15v12H8z" fill="#a5a5a5"/></svg></button>
    <button aria-label="Teams"><svg class="task-icon" viewBox="0 0 30 30"><circle cx="16" cy="6" r="5" fill="#7b83eb"/><circle cx="25" cy="8" r="3" fill="#5059c9"/><path d="M20 12h10v8c0 5-6 6-9 4z" fill="#5059c9"/><path d="M9 12h15v9c0 10-14 10-15 0z" fill="#7b83eb"/><path d="M0 8h15v14H0z" fill="#4b53bc"/><path d="M4 11h8M8 11v9" stroke="#fff" stroke-width="2"/></svg></button>
    <button aria-label="Edge"><svg class="task-icon" viewBox="0 0 30 30"><circle cx="15" cy="15" r="15" fill="#0f78d4"/><path d="M1 11C5-3 29-3 30 15c-1 6-9 7-11 3 2-6-10-12-18-7z" fill="#40c8a0"/><path d="M1 11c8-5 16-3 14 4-4 6 2 12 11 10-7 8-22 5-25-6z" fill="#1493dd"/></svg></button>
    <button class="running" aria-label="File Explorer"><svg class="task-icon" viewBox="0 0 30 30"><path d="M0 3h10l3 4h17v21H0z" fill="#e0a020"/><path d="M0 9h30v19H0z" fill="#fdcc58"/><path d="M5 21h20v7H5z" fill="#1677c8"/></svg></button>
    <button aria-label="Calculator"><svg class="task-icon" viewBox="0 0 30 30"><path d="M4 0h23v30H4z" fill="#717b88"/><path d="M7 3h17v6H7z" fill="#4cc2ff"/><path d="M7 11h5v5H7zm6 0h5v5h-5zm6 0h5v5h-5zM7 17h5v5H7zm6 0h5v5h-5zM7 23h5v5H7zm6 0h5v5h-5z" fill="#dfe4ea"/><path d="M19 17h5v11h-5z" fill="#144a7c"/></svg></button>
    <button class="running" aria-label="Chrome"><svg class="task-icon" viewBox="0 0 30 30"><path d="M15 15 2 8a15 15 0 0 1 26 0z" fill="#e33b2e"/><path d="M15 15 28 8a15 15 0 0 1-13 22z" fill="#fcc934"/><path d="M15 15v15A15 15 0 0 1 2 8z" fill="#2da94f"/><circle cx="15" cy="15" r="8" fill="#fff"/><circle cx="15" cy="15" r="6" fill="#4285f4"/></svg></button>
    <button aria-label="Store"><svg class="task-icon" viewBox="0 0 30 30"><path d="M9 7V2h12v5" fill="none" stroke="#38a8ea" stroke-width="2"/><path d="M1 6h28v21l-3 3H4l-3-3z" fill="#f2f2f2"/><path d="M9 12h6v6H9z" fill="#e95c3c"/><path d="M16 12h6v6h-6z" fill="#7cb82f"/><path d="M9 19h6v6H9z" fill="#2ba1e6"/><path d="M16 19h6v6h-6z" fill="#f8b82a"/></svg></button>
    <button aria-label="Outlook"><svg class="task-icon" viewBox="0 0 30 30"><path d="m5 9 12-8 13 8v16l-3 4H9l-4-4z" fill="#1b6fc4"/><path d="m6 12 24-2v16l-3 3H10z" fill="#3fb5f0"/><path d="m17 14 13-5v6l-12 7z" fill="#174f9c"/><path d="M0 10h17v17H0z" fill="#1078d4"/><circle cx="8.500" cy="18.500" r="4.500" fill="none" stroke="#fff" stroke-width="2.500"/></svg></button>
    <button class="running" aria-label="ChatGPT"><svg class="task-icon" viewBox="0 0 30 30"><g fill="none" stroke="#f5f5f5" stroke-width="2"><path id="petal" d="M10 15V7a6 6 0 0 1 11-3M10 15l7 4 7-4"/><use href="#petal" transform="rotate(60 15 15)"/><use href="#petal" transform="rotate(120 15 15)"/><use href="#petal" transform="rotate(180 15 15)"/><use href="#petal" transform="rotate(240 15 15)"/><use href="#petal" transform="rotate(300 15 15)"/></g></svg></button>
    <button class="running" aria-label="WhatsApp"><svg class="task-icon" viewBox="0 0 30 30"><path d="M2 28 4 21a13 13 0 1 1 5 5z" fill="#2b2b2b" stroke="#25d366" stroke-width="3"/><path d="M10 8c-5 5 6 17 12 13l-1-4-4-1-2 1-3-4 1-2-1-3z" fill="#25d366"/></svg></button>
    <button aria-label="L"><svg class="task-icon" viewBox="0 0 30 30"><path d="M0 0h30v30H0z" fill="#1d3db0"/><text x="15" y="22" class="l-mark">L</text></svg></button>
    <button aria-label="Copilot"><svg class="task-icon" viewBox="0 0 30 30"><path d="M9 2h11l-7 22c-1 3-3 3-5 3-5 0-8-2-7-7L5 6c1-3 2-4 4-4z" fill="#26a7ea"/><path d="m4 9-3 11c-1 5 3 7 7 7s5-2 6-5l2-6z" fill="#c9ce3f"/><path d="M17 5h5c6 0 8 3 7 7l-4 13c-1 3-3 3-5 3H10c3 0 3-2 4-4z" fill="#d35cab"/><path d="M17 5h5c6 0 7 3 7 7l-1 3-13 5z" fill="#a266dc"/><path d="m10 28 4-4 12-3-1 4c-1 3-3 3-5 3z" fill="#f0995d"/><path d="m12 10 7-1-3 12-6 1z" fill="#2b2b2b"/></svg></button>
    <button aria-label="CapCut"><svg class="task-icon" viewBox="0 0 30 30"><rect x="2" y="1" width="27" height="28" rx="5" fill="#fff"/><path d="M7 9h12v3l4-2m-16 11h12v-3l4 2M7 9v3l16 8M7 21v-3l16-8" fill="none" stroke="#111" stroke-width="2.500"/></svg></button>
    <button class="running" aria-label="Settings"><svg class="task-icon" viewBox="0 0 30 30"><circle cx="15" cy="15" r="11" fill="#77828c"/><circle cx="15" cy="15" r="12.500" fill="none" stroke="#77828c" stroke-width="5" stroke-dasharray="7 6"/><circle cx="15" cy="15" r="7" fill="#dfe8f0"/><circle cx="15" cy="15" r="5" fill="#1565b8"/></svg></button>
    <button class="current" aria-label="AutoCAD"><svg class="task-icon" viewBox="0 0 30 30"><path d="M2 0h26v22H2z" fill="#e8174b"/><path d="M2 0h4v22H2z" fill="#ff5a80"/><path d="M4 22h24v8H4z" fill="#7c0f26"/><text x="16" y="16" class="acad-a">A</text><text x="16" y="28" class="acad-cad">CAD</text></svg></button>
  </div>
  <div class="tray">
    <button aria-label="Hidden icons"><svg width="14" height="9" viewBox="0 0 14 9"><path d="m1 8 6-7 6 7" fill="none" stroke="#fff" stroke-width="1.800"/></svg></button>
    <button class="lang">ENG</button>
    <button class="tray-icons" aria-label="Network, volume and battery">
      <svg width="18" height="16" viewBox="0 0 18 16"><path d="M1 6c4-5 12-5 16 0M4 9c3-3 7-3 10 0M6 12c2-2 4-2 6 0" fill="none" stroke="#f2f2f2" stroke-width="1.500"/><circle cx="9" cy="14" r="1.500" fill="#f2f2f2"/></svg>
      <svg width="20" height="16" viewBox="0 0 20 16"><path d="M1 5h3l5-4v14l-5-4H1zM12 5l6 6m0-6-6 6" fill="none" stroke="#f2f2f2" stroke-width="1.400"/></svg>
      <svg width="21" height="20" viewBox="0 0 21 20"><path d="M8 4h8l3 4v4M4 12v5h8M8 8h6v6H8z" fill="none" stroke="#f2f2f2" stroke-width="2"/><path d="m6 0-5 8h3l-1 5 5-7H5z" fill="#f2f2f2"/><path d="m16 20-4-5c0-3 3-3 4-1 1-2 5-2 4 1z" fill="#f2f2f2"/></svg>
    </button>
    <button class="clock" dir="rtl">٠٦:٤٣ م<br>٢٠٢٥/٠٦/١٧</button>
  </div>
  <div class="watermark" lang="ar">خمســات</div>
</div>

</body>
</html>
```
FILE: styles.css
```css
* {
  box-sizing: border-box;
}

body {
  margin: 0;
  height: 100vh;
  display: flex;
  flex-direction: column;
  overflow: hidden;
  background-color: #222933;
  color: #f0f2f4;
  font-family: "Open Sans", "DejaVu Sans", sans-serif;
  font-size: 14px;
  line-height: 20px;
}

button {
  display: flex;
  align-items: center;
  padding: 0;
  border: none;
  background: none;
  color: inherit;
  font: inherit;
  white-space: nowrap;
}

input {
  min-width: 0;
  border: none;
  outline: none;
  background: none;
  color: inherit;
  font: inherit;
}

select {
  appearance: none;
  padding: 0 4px;
  border: 1px solid #2a303b;
  border-radius: 2px;
  color: #f0f2f4;
  font: inherit;
  background-color: #4d586b;
  background-image: linear-gradient(to top right, transparent 50%, #dcdcdc 50%), linear-gradient(to top left, transparent 50%, #dcdcdc 50%);
  background-size: 5px 5px;
  background-position: right 9px center, right 4px center;
  background-repeat: no-repeat;
}

svg {
  display: block;
  flex: none;
}

.icon {
  width: 20px;
  height: 20px;
}

.caret {
  flex: none;
  border: 5px solid transparent;
  border-top-color: #dcdcdc;
  border-bottom: none;
}

.caret.small {
  border-width: 4px;
  border-bottom: none;
}

.caret.dim {
  border-top-color: #8b9098;
}

.caret.dark {
  border-top-color: #444;
}

.caret-right {
  border: 6px solid transparent;
  border-left: 5px solid #dcdcdc;
  border-right: none;
}

.caret-up {
  border: 5px solid transparent;
  border-bottom-color: #444;
  border-top: none;
}

/* title bar */
.titlebar {
  display: flex;
  align-items: center;
  height: 40px;
  padding-bottom: 6px;
}

.quick-access, .title-right, .window-buttons {
  display: flex;
  align-items: center;
  flex: none;
}

.quick-access {
  gap: 10px;
  padding-left: 18px;
}

.quick-access .caret {
  margin: 0 3px 0 -6px;
}

.quick-access .caret.small {
  margin: 0 -1px 0 -2px;
}

.share {
  gap: 7px;
  color: #6fb9f2;
}

.logo-letter {
  font: bold 18px "Open Sans", sans-serif;
  fill: #fff;
  text-anchor: middle;
}

.doc-title {
  flex: 1;
  text-align: center;
  white-space: nowrap;
}

.title-right {
  gap: 11px;
}

.title-right .caret-right {
  margin-right: -5px;
}

.title-right .caret.small {
  margin-left: -3px;
}

.help-search {
  width: 223px;
  height: 26px;
  padding: 0 4px;
  margin-right: -5px;
  background-color: #455163;
  font-style: italic;
}

.help-search::placeholder {
  color: #b8bdc5;
  opacity: 1;
}

.signin {
  gap: 7px;
  margin-right: 52px;
}

.title-divider {
  width: 1px;
  height: 22px;
  background-color: #4a5668;
}

.help-mark {
  font: bold 14px "Open Sans", sans-serif;
  fill: #3b4453;
  text-anchor: middle;
}

.window-buttons {
  gap: 46px;
  margin: 0 21px 0 34px;
}

/* ribbon tabs */
.ribbon-tabs {
  display: flex;
  align-items: center;
  gap: 1px;
  height: 25px;
  padding-left: 1px;
  color: #b3b8c0;
}

.ribbon-tabs button {
  height: 25px;
  padding: 0 12px;
}

.ribbon-tabs .active {
  background-color: #3b4453;
  color: #fff;
}

.ribbon-tabs .ribbon-toggle {
  padding: 0 4px 0 25px;
}

/* ribbon */
.ribbon {
  display: flex;
  height: 124px;
  background-color: #3b4453;
}

.panel {
  display: flex;
  flex-direction: column;
  flex: none;
  margin: 1px 0;
  border-right: 1px solid #222933;
}

.recorder { width: 264px; }
.customization { width: 258px; }
.applications { width: 298px; }
.standards { width: 148px; }
.cleanup { width: 243px; }
.performance { width: 96px; border: none; }

.panel-body {
  display: flex;
  flex: 1;
  gap: 8px;
  padding: 3px 6px 0;
}

.recorder .panel-body {
  padding-left: 8px;
}

.customization .panel-body {
  gap: 6px;
}

.applications .panel-body, .cleanup .panel-body {
  gap: 11px;
}

.panel-title {
  display: flex;
  align-items: center;
  justify-content: center;
  gap: 8px;
  height: 21px;
}

.big {
  flex-direction: column;
  align-self: flex-start;
  padding-top: 4px;
  text-align: center;
}

.big-icon {
  width: 40px;
  height: 40px;
  margin-bottom: 5px;
}

.stack {
  display: flex;
  flex-direction: column;
  gap: 11px;
  padding: 4px 12px 12px 2px;
  border-right: 1px solid #222933;
  align-self: flex-start;
}

.recorder-side {
  flex: 1;
  margin-right: -3px;
}

.play-row {
  display: flex;
  align-items: center;
  gap: 16px;
  height: 32px;
  padding-left: 3px;
}

.play-row button {
  gap: 7px;
}

.macro-select {
  width: 100%;
  height: 27px;
}

.list {
  display: flex;
  flex-direction: column;
}

.list button {
  gap: 7px;
  height: 31px;
}

.performance .panel-body {
  justify-content: center;
}

.cui-text {
  font: 13px "Open Sans", sans-serif;
  fill: #fff;
  text-anchor: middle;
}

.file-tag {
  font: bold 7px "Liberation Sans", sans-serif;
  fill: #fff;
  text-anchor: middle;
}

/* drawing tabs */
.file-tabs, .layout-tabs {
  display: flex;
  align-items: center;
}

.file-tabs {
  height: 33px;
  padding: 3px 20px 0;
}

.hamburger {
  width: 20px;
  height: 20px;
}

.hamburger i {
  width: 20px;
  height: 16px;
  border-top: 2px solid #dcdcdc;
  border-bottom: 2px solid #dcdcdc;
  background: linear-gradient(#dcdcdc, #dcdcdc) center / 100% 2px no-repeat;
}

.slash {
  width: 9px;
  height: 20px;
  background: linear-gradient(to bottom right, transparent 46%, #5b6473 46%, #5b6473 54%, transparent 54%);
}

.plus {
  width: 18px;
  height: 18px;
  background: linear-gradient(#dcdcdc, #dcdcdc) center / 100% 2px no-repeat, linear-gradient(#dcdcdc, #dcdcdc) center / 2px 100% no-repeat;
}

.file-tabs .slash {
  margin: 0 12px;
}

.file-tabs .tab-plain {
  margin: 0 8px 0 -2px;
}

.file-tab {
  display: flex;
  align-items: center;
  justify-content: space-between;
  width: 222px;
  height: 30px;
  padding: 0 15px 0 23px;
  margin-right: 12px;
  background-color: #3b4453;
  clip-path: polygon(11px 0, 100% 0, calc(100% - 11px) 100%, 0 100%);
}

.tab-name {
  font-weight: bold;
}

.tab-name bdi {
  font-size: 13px;
}

/* workspace */
.workspace {
  display: flex;
  flex: 1;
  min-height: 0;
  padding: 5px 0;
  background-color: #3b4453;
}

.palette {
  display: flex;
  flex-direction: column;
  width: 295px;
  min-height: 0;
  padding-top: 3px;
}

.palette h2 {
  display: flex;
  align-items: center;
  height: 27px;
  margin: 0 5px 15px 0;
  padding: 0 0 2px 9px;
  border-radius: 4px;
  background-color: #2e3440;
  font-size: 14px;
  font-weight: normal;
}

.palette h2::before {
  content: "";
  width: 4px;
  height: 10px;
  margin-right: 6px;
  border-left: 1px dotted #c0c4ca;
  border-right: 1px dotted #c0c4ca;
}

.palette-tools {
  display: flex;
  align-items: center;
  gap: 9px;
  padding-left: 22px;
  margin-bottom: 5px;
}

.palette-tools select {
  width: 167px;
  height: 29px;
  margin-right: 1px;
}

.property-list {
  flex: 1;
  min-height: 0;
  overflow: hidden;
  margin: 0 19px 20px 4px;
  padding-left: 17px;
  background: linear-gradient(#566174, #566174) 0 0 / 7px 568px no-repeat;
}

.property-list table {
  width: 234px;
  margin: 0 0 4px 21px;
  border-collapse: collapse;
  table-layout: fixed;
}

.property-list caption {
  height: 26px;
  margin-left: -21px;
  padding: 4px 9px 2px;
  background-color: #2e3440;
  font-weight: bold;
  text-align: left;
}

.property-list caption .caret {
  float: right;
  margin-top: 6px;
}

.property-list th, .property-list td {
  height: 26px;
  padding: 0 3px;
  border: 1px solid #2b313c;
  font-weight: normal;
  text-align: left;
  white-space: nowrap;
  overflow: hidden;
}

.property-list th {
  width: 103px;
  padding: 0 0 0 9px;
  color: #c9cdd3;
}

.property-list .locked {
  color: #8a919c;
}

.swatch {
  display: inline-block;
  width: 18px;
  height: 18px;
  margin-right: 7px;
  border: 1px solid #dcdcdc;
  background-color: #f00;
  vertical-align: middle;
}

.line-sample {
  display: inline-block;
  width: 58px;
  height: 1px;
  margin: 0 5px 0 1px;
  background-color: #fff;
  vertical-align: middle;
}

.drawing-column {
  display: flex;
  flex-direction: column;
  flex: 1;
  min-width: 0;
}

.drawing {
  position: relative;
  flex: 1;
  min-height: 0;
  background-color: #212830;
}

/* floor plan */
.plan {
  width: 100%;
  height: 100%;
  shape-rendering: crispEdges;
}

.plan .smooth, .plan circle {
  shape-rendering: auto;
}

.wall {
  fill: none;
  stroke: #00d8dc;
}

.dim {
  fill: none;
  stroke: #00d010;
}

.dim .dim-main {
  stroke: #10a010;
  stroke-width: 2;
}

.mark {
  stroke: #c8c800;
}

.white {
  fill: none;
  stroke: #f0f0f0;
}

.opening {
  fill: none;
  stroke: #0a0ae6;
}

.opening .thick {
  stroke-width: 3;
}

.opening .window {
  fill: #0a0ad2;
}

.opening .smooth, .red .smooth {
  stroke-width: 1.5;
}

.red {
  fill: none;
  stroke: #dc0a10;
}

.jamb {
  stroke: #1478d2;
  stroke-width: 3;
}

.sill {
  stroke: #3c7a14;
  stroke-width: 2;
}

.column {
  fill: url(#hatch);
  stroke: #0a0adc;
}

.arabic text {
  font: bold 12px "DejaVu Sans", sans-serif;
  fill: #f4f400;
  text-anchor: middle;
  direction: rtl;
}

.arabic .tiny {
  font-size: 9px;
}

.arabic .large {
  font-size: 19px;
  font-weight: normal;
}

.latin text {
  font: 10px "Liberation Sans", sans-serif;
  fill: #f0f0f0;
  text-anchor: middle;
}

.latin .tiny {
  font-size: 8px;
}

.latin .large {
  font-size: 13px;
}

.measure text {
  font: bold 9px "DejaVu Sans", sans-serif;
  fill: #fff;
  text-anchor: middle;
}

/* items that float over the drawing */
.view-label {
  position: absolute;
  top: 6px;
  left: 4px;
}

.viewport-buttons {
  position: absolute;
  top: 11px;
  right: 11px;
  display: flex;
  gap: 11px;
}

.view-cube {
  position: absolute;
  top: 48px;
  right: 18px;
  display: flex;
  flex-direction: column;
  align-items: center;
  gap: 22px;
}

.cube-top {
  font: bold 13px "Open Sans", sans-serif;
  fill: #50565e;
  text-anchor: middle;
}

.cube-side text {
  font: bold 21px "Liberation Sans", sans-serif;
  fill: #b4b7ba;
  text-anchor: middle;
}

.wcs {
  width: 56px;
  height: 20px;
  justify-content: space-between;
  padding: 0 5px;
  border-radius: 5px;
  background-color: #98a1aa;
  color: #59616b;
  font: 13px "Liberation Sans", sans-serif;
}

.wcs .caret {
  border-top-color: #b9c1c9;
}

.nav-bar {
  position: absolute;
  top: 258px;
  right: 3px;
  display: flex;
  flex-direction: column;
  align-items: center;
  justify-content: space-between;
  width: 40px;
  height: 260px;
  padding: 21px 0 22px;
  border-left: 2px solid #73777a;
  border-radius: 4px;
  background-color: #595e61;
}

.nav-bar::before, .nav-bar::after {
  content: "";
  position: absolute;
  right: 2px;
  width: 9px;
  height: 9px;
  border-radius: 50%;
  background-color: #484d52;
}

.nav-bar::before { top: 3px; }
.nav-bar::after { bottom: 3px; }

.nav-bar svg {
  fill: none;
  stroke: #3f464d;
  stroke-width: 1.5;
}

.nav-bar .caret {
  border-top-color: #3f464d;
}

.nav-bar .group {
  border-top: 1px dashed #484d52;
  padding-top: 3px;
}

/* command line */
.command-line {
  position: relative;
  display: flex;
  align-items: center;
  height: 32px;
  margin-left: -6px;
  border-radius: 4px 0 0 4px;
  background-color: #2b313b;
}

.grip {
  width: 6px;
  height: 22px;
  margin: 0 9px 0 4px;
  border-left: 2px dotted #c0c4ca;
  border-right: 2px dotted #c0c4ca;
}

.command-line button {
  margin-right: 15px;
}

.command-field {
  display: flex;
  align-items: center;
  flex: 1;
  align-self: stretch;
  margin-left: -9px;
  padding: 0 1px 0 5px;
  background-color: #bcbdbe;
}

.command-field .caret {
  margin: 0 7px 0 2px;
}

.command-field input {
  flex: 1;
  padding: 0;
  font: italic 15px "DejaVu Sans Mono", monospace;
}

.command-field input::placeholder {
  color: #6a6c6e;
  opacity: 1;
}

/* status bar */
.status-bar {
  display: flex;
  justify-content: space-between;
  height: 36px;
}

.layout-tabs {
  height: 31px;
  padding-left: 20px;
}

.layout-tab {
  height: 31px;
  padding: 0 21px;
  margin: 0 10px 0 11px;
  background-color: #3b4453;
  clip-path: polygon(11px 0, 100% 0, calc(100% - 11px) 100%, 0 100%);
  font-weight: bold;
}

.layout-tabs .slash {
  margin: 0 12px;
}

.status-tools {
  display: flex;
  gap: 3px;
  padding: 2px 1px 3px 0;
}

.tool-group {
  display: flex;
  align-items: center;
  gap: 10px;
  padding: 0 5px;
  background-color: #3b4453;
}

.tool-group.wide {
  gap: 14px;
  padding: 0 8px;
}

.tool-group .on {
  height: 29px;
  padding: 0 4px;
  margin-right: -8px;
  background-color: #5f8dc0;
}

.tool-group .caret + .on {
  margin-left: -3px;
}

.tool-group .on + .caret {
  margin-left: 4px;
}

.tool-group .scale + .caret {
  margin-left: -7px;
}

/* taskbar */
.taskbar {
  position: relative;
  display: flex;
  align-items: center;
  height: 60px;
  border-top: 1px solid #4a4a4a;
  background-color: #2b2b2b;
}

.weather {
  gap: 5px;
  width: 391px;
  padding: 0 0 3px 28px;
  text-align: left;
  line-height: 21px;
}

.weather em {
  color: #c4c4c4;
  font-style: normal;
}

.badge-text {
  font: 14px "Open Sans", sans-serif;
  fill: #222;
  text-anchor: middle;
}

.task-search {
  display: flex;
  align-items: center;
  gap: 13px;
  width: 275px;
  height: 40px;
  margin: 0 2px 0 17px;
  padding: 0 8px 0 15px;
  border: 1px solid #5c5c5c;
  border-radius: 20px;
  background-color: #454545;
}

.task-search input {
  flex: 1;
  padding: 0;
  font-size: 16px;
}

.task-search input::placeholder {
  color: #e4e4e4;
  opacity: 1;
}

.task-apps {
  display: flex;
}

.task-apps button {
  position: relative;
  justify-content: center;
  width: 49px;
  height: 50px;
  margin: 0 3px;
  border-radius: 5px;
}

.task-icon {
  width: 30px;
  height: 30px;
}

.running::after, .current::after {
  content: "";
  position: absolute;
  bottom: 1px;
  width: 8px;
  height: 4px;
  border-radius: 2px;
  background-color: #9b9b9b;
}

.task-apps .current {
  background-color: #3d3d3d;
}

.current::after {
  width: 20px;
  background-color: #4cc2ff;
}

.l-mark {
  font: bold 20px "Open Sans", sans-serif;
  fill: #fff;
  text-anchor: middle;
}

.acad-a {
  font: bold 15px "Open Sans", sans-serif;
  fill: #fff;
  text-anchor: middle;
}

.acad-cad {
  font: bold 6px "Open Sans", sans-serif;
  fill: #fff;
  text-anchor: middle;
}

.tray {
  display: flex;
  align-items: center;
  gap: 25px;
  margin-left: auto;
  padding-right: 24px;
}

.tray-icons {
  gap: 10px;
}

.clock {
  padding-bottom: 3px;
  margin-left: -8px;
  text-align: right;
  line-height: 21px;
}

.watermark {
  position: absolute;
  left: 43%;
  top: -24px;
  color: #fff;
  font: bold 58px "DejaVu Sans", sans-serif;
  opacity: 0.28;
  pointer-events: none;
}
```
